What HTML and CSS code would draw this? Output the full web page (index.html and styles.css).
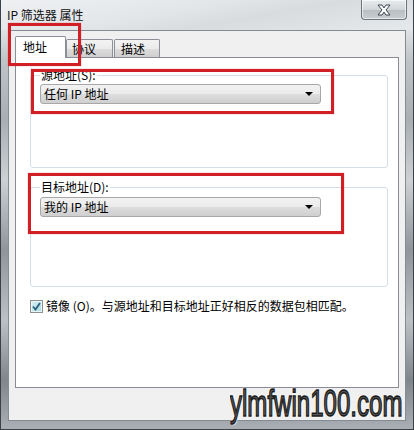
FILE: index.html
```html
<!DOCTYPE html>
<html lang="zh-CN">
<head>
    <meta charset="UTF-8">
    <title>IP 筛选器 属性</title>
    <link rel="stylesheet" href="styles.css">
</head>
<body>
    <div class="window">
        <div class="titlebar">
            <span class="title">IP 筛选器 属性</span>
            <button class="close-btn">
                <svg width="18" height="12" viewBox="0 0 18 12">
                    <path d="M3 1 L7 1 L9 4 L11 1 L15 1 L11 6 L15 11 L11 11 L9 8 L7 11 L3 11 L7 6 Z" fill="#fff" stroke="#3c4650" stroke-width="1"/>
                </svg>
            </button>
        </div>

        <div class="client">
            <div class="tabs">
                <div class="tab active">地址</div>
                <div class="tab">协议</div>
                <div class="tab">描述</div>
            </div>
            <div class="panel">
                <fieldset class="group group-src">
                    <legend>源地址(S):</legend>
                    <div class="combo">
                        <span>任何 IP 地址</span>
                        <span class="arrow"></span>
                    </div>
                </fieldset>
                <fieldset class="group group-dst">
                    <legend>目标地址(D):</legend>
                    <div class="combo">
                        <span>我的 IP 地址</span>
                        <span class="arrow"></span>
                    </div>
                </fieldset>
                <label class="mirror">
                    <span class="checkbox">
                        <svg width="11" height="11" viewBox="0 0 11 11">
                            <path d="M2 5.5 L4.5 8.5 L9 2" fill="none" stroke="#2b5f78" stroke-width="1.8"/>
                        </svg>
                    </span>
                    <span>镜像 (O)。与源地址和目标地址正好相反的数据包相匹配。</span>
                </label>
            </div>
        </div>
    </div>

    <!-- annotation boxes drawn over the dialog -->
    <div class="mark mark-tab"></div>
    <div class="mark mark-src"></div>
    <div class="mark mark-dst"></div>

    <div class="watermark"><span>ylmfwin100.com</span></div>
</body>
</html>
```

FILE: styles.css
```css
body {
    margin: 0;
    width: 414px;
    height: 430px;
    overflow: hidden;
    position: relative;
    font-family: "Noto Sans CJK SC", "Liberation Sans", sans-serif;
    font-size: 12px;
    color: #000;
}

.window {
    height: 430px;
    box-sizing: border-box;
    padding: 0 7px 8px 7px;
    border: 1px solid #3b4148;
    border-top: none;
    background: linear-gradient(180deg, #e7eaec 0, #dfe3e6 30px, #bfc4c8 60px, #a9aeb3 120px, #cdd1d4 180px, #8f959b 250px, #bcc1c5 320px, #7f868c 380px, #aab0b5 430px);
    display: flex;
    flex-direction: column;
}

.titlebar {
    height: 30px;
    display: flex;
    align-items: flex-start;
    justify-content: space-between;
    margin: 0 -7px;
    padding: 0 7px 0 6px;
    background: linear-gradient(170deg, #eef0f2 0, #e3e6e9 40%, #d8dcdf 60%, #e6e9eb 100%);
}

.title {
    margin-top: 7px;
    font-size: 12px;
    line-height: 16px;
    color: #111;
}

.close-btn {
    width: 46px;
    height: 20px;
    margin-right: -1px;
    padding: 0;
    border: 1px solid #6b737b;
    border-top: none;
    border-radius: 0 0 4px 4px;
    background: linear-gradient(180deg, #e9ecee 0, #d2d6d9 50%, #b9bec2 51%, #c9cdd0 100%);
    box-shadow: inset 0 0 0 1px rgba(255,255,255,0.6);
    display: flex;
    align-items: center;
    justify-content: center;
}

.client {
    flex: 1;
    background: #f0f0f0;
    border: 1px solid #838b93;
    padding: 5px 8px 0 6px;
    display: flex;
    flex-direction: column;
}

.tabs {
    display: flex;
    align-items: flex-end;
    height: 21px;
}

.tab {
    height: 18px;
    line-height: 18px;
    padding: 0 6px;
    box-sizing: border-box;
    border: 1px solid #8c8f96;
    border-bottom: none;
    border-radius: 2px 2px 0 0;
    background: linear-gradient(180deg, #f3f3f3 0, #ebebeb 50%, #dddddd 51%, #cfcfcf 100%);
    margin-right: 1px;
    color: #000;
}

.tab:nth-child(2) { width: 47px; margin-left: -1px; padding-left: 5px; }
.tab:nth-child(3) { width: 46px; }

.tab.active {
    width: 51px;
    height: 22px;
    line-height: 20px;
    padding-left: 7px;
    background: #fff;
    margin-bottom: -1px;
    position: relative;
    z-index: 1;
}

.panel {
    width: 384px;
    height: 331px;
    box-sizing: border-box;
    background: #fff;
    border: 1px solid #898c95;
    padding: 10px 10px 0 14px;
}

.group {
    margin: 0;
    width: 358px;
    box-sizing: border-box;
    border: 1px solid #d5dfe5;
    border-radius: 3px;
    padding: 0 9px;
}

.group legend {
    padding: 0 1px;
    margin-left: 0;
    line-height: 14px;
    color: #000;
}

.group-src {
    padding-bottom: 63px;
}

.group-dst {
    margin-top: 12px;
    padding-bottom: 69px;
}

.combo {
    width: 281px;
    height: 20px;
    box-sizing: border-box;
    margin-top: 2px;
    border: 1px solid #a7a7a7;
    border-radius: 3px;
    background: linear-gradient(180deg, #f2f2f2 0, #ebebeb 50%, #dddddd 51%, #cfcfcf 100%);
    display: flex;
    align-items: center;
    justify-content: space-between;
    padding: 0 7px 0 3px;
    line-height: 18px;
}

.group-dst .combo {
    margin-top: 3px;
}

.arrow {
    width: 0;
    height: 0;
    border-left: 4px solid transparent;
    border-right: 4px solid transparent;
    border-top: 4px solid #000;
}

.mirror {
    display: flex;
    align-items: center;
    margin-top: 11px;
    line-height: 16px;
    color: #000;
}

.checkbox {
    width: 13px;
    height: 13px;
    box-sizing: border-box;
    border: 1px solid #8e8f8f;
    background: linear-gradient(135deg, #d6eef2 0, #a9dde6 100%);
    box-shadow: inset 0 0 0 1px #e8f6f8;
    display: flex;
    align-items: center;
    justify-content: center;
    margin-right: 3px;
}

.mark {
    position: absolute;
    border: 3px solid #d21f26;
    box-sizing: border-box;
    box-shadow: 0 0 1px rgba(210, 31, 38, 0.6);
}

.mark-tab { left: 8px; top: 23px; width: 73px; height: 43px; }
.mark-src { left: 31px; top: 69px; width: 303px; height: 45px; }
.mark-dst { left: 28px; top: 173px; width: 316px; height: 61px; }

.watermark {
    position: absolute;
    left: 230px;
    top: 382px;
    width: 178px;
    height: 46px;
    overflow: hidden;
}

.watermark span {
    display: block;
    width: 280px;
    font-family: "Liberation Sans", Arial, sans-serif;
    font-size: 37px;
    line-height: 44px;
    color: #555;
    -webkit-text-stroke: 1.5px #1a1a1a;
    text-shadow: 0 0 2px #fff, 1px 1px 2px #fff, -1px -1px 2px #fff;
    transform: scaleX(0.65);
    transform-origin: left center;
    white-space: nowrap;
}
```
